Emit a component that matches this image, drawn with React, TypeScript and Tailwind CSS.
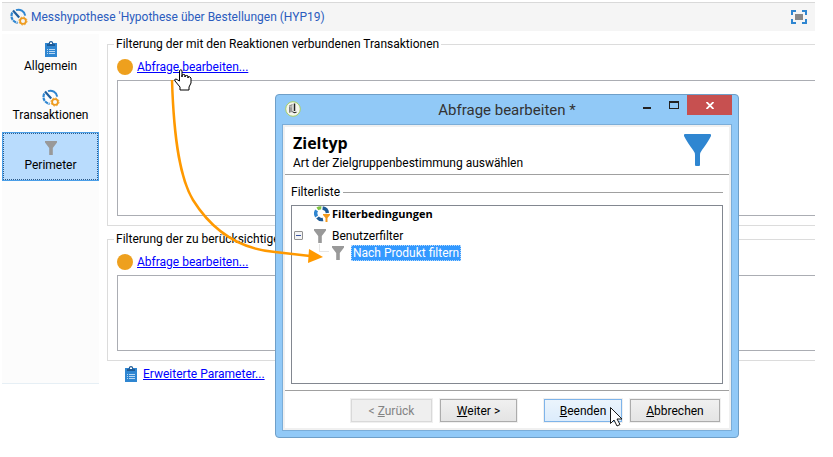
import type { ReactNode } from "react";

function GaugeIcon() {
  return (
    <svg width="18" height="18" viewBox="0 0 18 18" fill="none" aria-hidden="true">
      <path d="M6 2.100A7 7 0 0 1 15.200 7.600" stroke="#2f86d1" strokeWidth="2" />
      <path d="M2.300 4.600A7 7 0 0 0 7.600 14.800" stroke="#2f86d1" strokeWidth="2.200" strokeDasharray="3.400 .7" />
      <path d="M3 2.400L9.200 9.400" stroke="#1f5f9f" strokeWidth="2.200" />
      <circle cx="13" cy="13" r="2.900" stroke="#ee9b1e" strokeWidth="1.800" />
      <circle cx="13" cy="13" r="4" stroke="#ee9b1e" strokeWidth="1" strokeDasharray="1.600 1.540" />
    </svg>
  );
}

function ClipboardIcon() {
  return (
    <svg width="12" height="16" viewBox="0 0 12 16" aria-hidden="true">
      <path d="M0 2h12v14H0z" fill="#2f86d1" />
      <path d="M2 3h8v2H2z" fill="#1d5a96" />
      <path d="M3.500 3.500Q4.500 3 4.500 1.800 4.500 .7 6 .7T7.500 1.800Q7.500 3 8.500 3.500z" fill="#fff" stroke="#1d5a96" strokeWidth="1.200" />
      <path d="M2 8.500h1M4 8.500h6M2 10.500h1M4 10.500h6M2 12.500h1M4 12.500h6" stroke="#b9d8f3" strokeWidth="1" />
    </svg>
  );
}

function FunnelIcon({ large = false }: { large?: boolean }) {
  return large ? (
    <svg width="27" height="32" viewBox="0 0 27 32" aria-hidden="true">
      <path d="M1 0h25q1 0 1 1v1Q24 8 18 16q-2 2.500-2 5v10q0 1-1 1h-3q-1 0-1-1V21q0-2.500-2-5Q3 8 0 2V1Q0 0 1 0z" fill="#2f86d1" />
    </svg>
  ) : (
    <svg width="12" height="14" viewBox="0 0 12 14" aria-hidden="true">
      <path d="M0 0h12v1.500L7.800 7v7H4.200V7L0 1.500z" fill="#999" />
    </svg>
  );
}

function ConditionsIcon() {
  return (
    <svg width="16" height="16" viewBox="0 0 16 16" fill="none" aria-hidden="true">
      <path d="M3.400 2.800A5.600 5.600 0 0 1 7.300 1.900" stroke="#7fc241" strokeWidth="3.400" />
      <path d="M8.600 2A5.600 5.600 0 0 1 13.400 7" stroke="#1d5a96" strokeWidth="3.400" />
      <path d="M2.600 4.300A5.600 5.600 0 0 0 2.700 10.500" stroke="#2f86d1" strokeWidth="3.400" />
      <path d="M3.500 11.500A5.600 5.600 0 0 0 9 13.500" stroke="#1d5a96" strokeWidth="3.400" />
      <path d="M9 8h7v1l-2.500 3v4h-2v-4L9 9z" fill="#f39a1e" />
    </svg>
  );
}

function AppIcon() {
  return (
    <svg width="16" height="16" viewBox="0 0 16 16" fill="none" aria-hidden="true">
      <circle cx="8" cy="8" r="7.300" fill="#f4f5ee" stroke="#a9cf62" />
      <path d="M4 5l3.500-1.500V11L4 12z" fill="#b5b5b0" />
      <path d="M4 5l3.500-1.500M4.500 6v5.500M6 6.500V11" stroke="#777" strokeWidth=".8" />
      <path d="M9.500 2.500V10" stroke="#222" strokeWidth="1.500" />
      <path d="M7.500 10.500q1.500 2 4 .5" stroke="#333" strokeWidth="1.200" />
    </svg>
  );
}

function NavItem({ icon, label, selected = false }: { icon: ReactNode; label: string; selected?: boolean }) {
  return (
    <button
      type="button"
      aria-current={selected ? "page" : undefined}
      className={
        selected
          ? "flex h-[49px] flex-col items-center border border-[#4b9fe8] bg-[#b9dcfd] pt-1.5 outline-1 -outline-offset-2 outline-dotted outline-[#2d5b8a]"
          : "flex h-[49px] flex-col items-center border border-transparent pt-[5px]"
      }
    >
      <span className="flex h-[18px] items-center">{icon}</span>
      <span>{label}</span>
    </button>
  );
}

function QueryGroup({ title, tall = false }: { title: string; tall?: boolean }) {
  return (
    <fieldset className="min-w-0 border border-r-0 border-[#dcdcdc] pb-[9px] pl-1.5">
      <legend className="px-0.5 whitespace-nowrap">{title}</legend>
      <div className="flex flex-col gap-[5px] pt-[7px] pl-[3px]">
        <div className="flex items-center gap-1">
          <span className="size-4 rounded-full bg-[#eea01e]" />
          <a href="#abfrage" className="text-[#0000ff] underline">Abfrage bearbeiten...</a>
        </div>
        <textarea
          readOnly
          aria-label={title}
          className={
            tall
              ? "block h-[136px] w-full resize-none border border-r-0 border-[#abadb3] bg-white outline-none"
              : "block h-[76px] w-full resize-none border border-r-0 border-[#abadb3] bg-white outline-none"
          }
        />
      </div>
    </fieldset>
  );
}

const buttonBase = "h-[23px] border outline-1 outline-[#f0f0f0]";

function QueryDialog() {
  return (
    <div
      role="dialog"
      aria-label="Abfrage bearbeiten"
      className="absolute top-[94px] left-[275px] w-[464px] rounded-[4px] border border-[#6f9fc8] bg-[#91c9f7] px-1.5 pb-1.5"
    >
      <header className="grid h-[29px] grid-cols-[1fr_auto_1fr] items-start">
        <span className="pt-[6px] pl-[3px]"><AppIcon /></span>
        <h1 className="pt-[5px] text-[15px] leading-5 text-[#333]">Abfrage bearbeiten *</h1>
        <div className="flex justify-end">
          <button type="button" aria-label="Minimieren" className="flex h-5 w-7 items-center justify-center pt-[5px]">
            <span className="h-0.5 w-2 bg-[#222]" />
          </button>
          <button type="button" aria-label="Maximieren" className="flex h-5 w-[26px] items-center justify-center">
            <span className="h-2 w-2.5 border border-t-2 border-[#222]" />
          </button>
          <button type="button" aria-label="Schließen" className="flex h-5 w-[45px] items-center justify-center bg-[#c75050]">
            <svg width="8" height="7" viewBox="0 0 8 7" aria-hidden="true">
              <path d="M.5 0L7.500 7M7.500 0L.5 7" stroke="#fff" strokeWidth="1.800" />
            </svg>
          </button>
        </div>
      </header>
      <div className="border border-[#7badd8] bg-[#f0f0f0] p-0.5">
        <div className="bg-white">
          <div className="flex h-12 justify-between border-b border-[#a0a0a0] pr-[18px] pl-2">
            <div className="pt-1.5">
              <h2 className="font-['Open_Sans',sans-serif] text-base leading-5 font-bold">Zieltyp</h2>
              <p className="leading-5">Art der Zielgruppenbestimmung auswählen</p>
            </div>
            <span className="pt-[7px]"><FunnelIcon large /></span>
          </div>
          <div className="px-1.5 pt-[9px] pb-1.5">
            <div className="flex items-center gap-[3px]">
              <span id="filterliste">Filterliste</span>
              <span className="h-px flex-1 bg-[#a0a0a0]" />
            </div>
            <ul role="tree" aria-labelledby="filterliste" className="mt-[5px] h-[179px] border border-[#828790] pl-0.5">
              <li role="treeitem" className="flex h-4 items-center gap-0.5 pl-5 font-['Open_Sans',sans-serif] text-[11px] font-bold">
                <ConditionsIcon />Filterbedingungen
              </li>
              <li role="treeitem" aria-expanded="true" className="mt-[5px]">
                <div className="flex h-[17px] items-center">
                  <button type="button" aria-label="Benutzerfilter einklappen" className="flex size-[9px] items-center justify-center rounded-[1px] border border-[#919191] bg-[#f4f4f4]">
                    <span className="h-px w-[5px] bg-[#3b55a0]" />
                  </button>
                  <span className="pr-1.5 pl-[11px]"><FunnelIcon /></span>
                  Benutzerfilter
                </div>
                <ul role="group" className="ml-[25px]">
                  <li role="treeitem" aria-selected="true" className="flex h-[17px] items-center">
                    <span className="h-2 w-2.5 self-start border-b border-l border-[#e6e6e6]" />
                    <span className="px-[3px]"><FunnelIcon /></span>
                    <span className="ml-1 bg-[#3399ff] px-0.5 text-white outline-1 -outline-offset-1 outline-dotted outline-[#b5d9fd]">Nach Produkt filtern</span>
                  </li>
                </ul>
              </li>
            </ul>
          </div>
          <footer className="flex justify-end border-t border-[#a0a0a0] pt-2 pr-[9px] pb-[6px]">
            <button type="button" disabled className={`${buttonBase} mr-2 w-[81px] border-[#d9d9d9] bg-[#efefef] text-[#838383]`}>
              &lt; <u>Z</u>urück
            </button>
            <button type="button" className={`${buttonBase} mr-[27px] w-[77px] border-[#acacac] bg-linear-to-b from-[#f0f0f0] to-[#e4e4e4]`}>
              <u>W</u>eiter &gt;
            </button>
            <button type="button" className={`${buttonBase} mr-2 w-[78px] border-[#7eb4ea] bg-linear-to-b from-[#ebf4fc] to-[#dcecfc]`}>
              <u>B</u>eenden
            </button>
            <button type="button" className={`${buttonBase} w-[90px] border-[#acacac] bg-linear-to-b from-[#f0f0f0] to-[#e4e4e4]`}>
              <u>A</u>bbrechen
            </button>
          </footer>
        </div>
      </div>
    </div>
  );
}

export default function App() {
  return (
    <div className="relative min-h-screen bg-white pt-0.5 pr-[18px] pl-0.5 font-['Roboto',sans-serif] text-xs leading-4 text-black">
      <header className="flex h-[29px] items-center border-t border-[#d9d9d9] bg-[#f5f5f5] pr-2 pl-2">
        <GaugeIcon />
        <h1 className="ml-[3px] flex-1 text-[#2b5cbe]">Messhypothese 'Hypothese über Bestellungen (HYP19)</h1>
        <button type="button" aria-label="Vollbild">
          <svg width="16" height="14" viewBox="0 0 16 14" fill="none" aria-hidden="true">
            <path d="M1 5V1h4M11 1h4v4M15 9v4h-4M5 13H1V9" stroke="#2f86d1" strokeWidth="2" />
            <path d="M4 4h8v6H4z" fill="#888" />
          </svg>
        </button>
      </header>
      <div className="mt-[3px] flex gap-2">
        <nav className="flex h-[350px] w-[97px] shrink-0 flex-col border-b border-[#e6eff5] bg-[#fcfcfc]">
          <NavItem icon={<ClipboardIcon />} label="Allgemein" />
          <NavItem icon={<GaugeIcon />} label="Transaktionen" />
          <NavItem icon={<FunnelIcon />} label="Perimeter" selected />
        </nav>
        <main className="min-w-0 flex-1 pt-0.5">
          <QueryGroup title="Filterung der mit den Reaktionen verbundenen Transaktionen" tall />
          <div className="mt-[5px]">
            <QueryGroup title="Filterung der zu berücksichtigen" />
          </div>
          <div className="mt-[5px] flex items-center gap-1.5 pl-[18px]">
            <ClipboardIcon />
            <a href="#parameter" className="text-[#0000ff] underline">Erweiterte Parameter...</a>
          </div>
        </main>
      </div>
      <QueryDialog />
      <svg className="pointer-events-none absolute top-0 left-0" width="640" height="440" viewBox="0 0 640 440" fill="none" aria-hidden="true">
        <path d="M172 80C174 145 181 180 193 200C213 232 240 249 275 252L310 256" stroke="#ff9900" strokeWidth="2.500" />
        <path d="M309 249L323 257L308 263Z" fill="#ff9900" />
        <path d="M179.500 70.500q1.500-1.500 2.500 0V77v-2q2-1 3 0v2-1q2-1 3 0v2-1q2-1 3 1v5l-2 4v3h-9v-3l-5-6q-1-2 1-2l3.500 2z" fill="#fff" stroke="#000" />
        <path d="M610.500 407.500v16l3.500-3.500 3 6 3-1.500-3-5.500h5z" fill="#fff" stroke="#1a1a1a" />
      </svg>
    </div>
  );
}
